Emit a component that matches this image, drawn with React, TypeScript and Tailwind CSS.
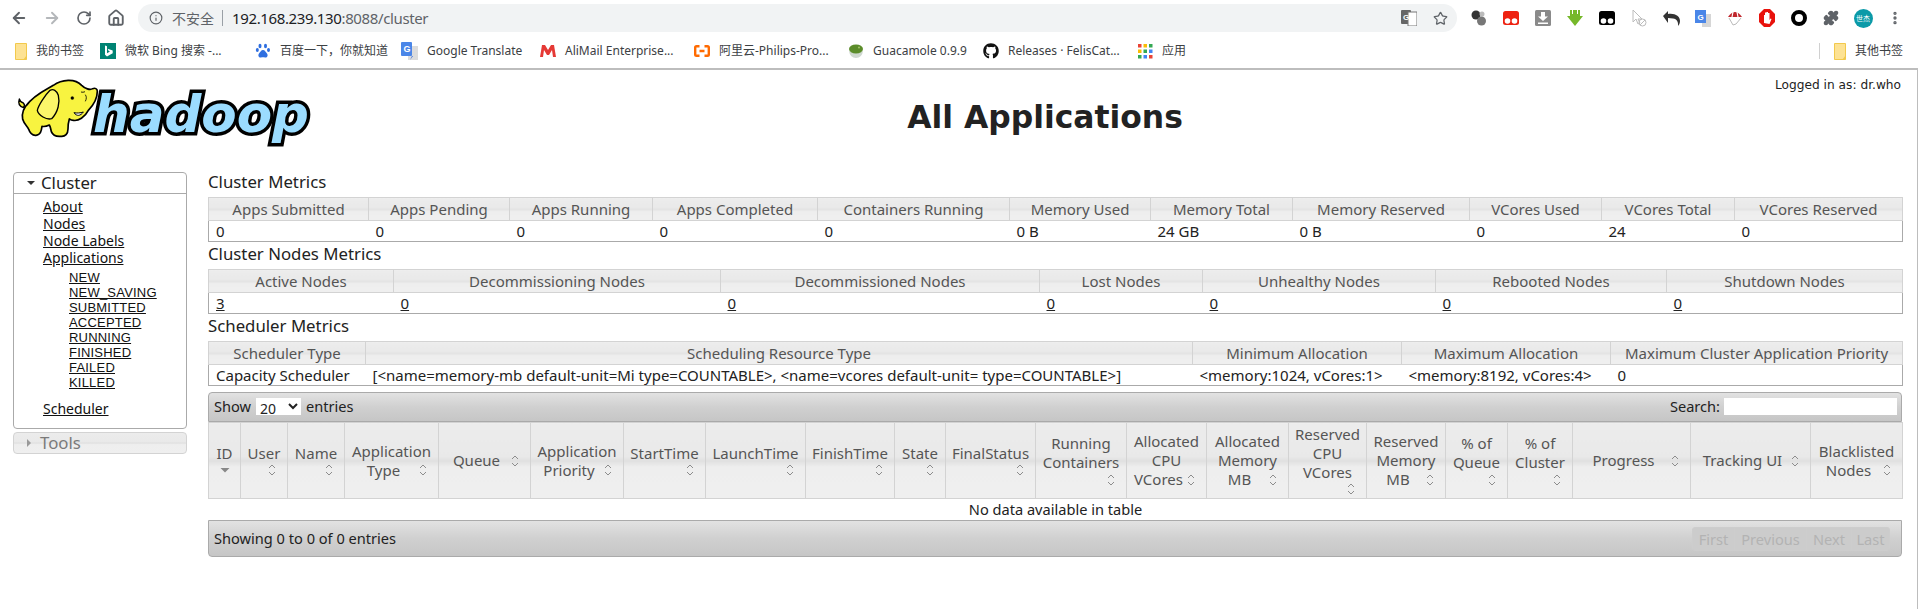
import React from 'react';
import { ArrowLeft, ArrowRight, RotateCw, Home, Info, Star, Puzzle, MoreVertical } from 'lucide-react';
import { FaGithub } from 'react-icons/fa';

const thBg = 'bg-[linear-gradient(#ececec_0%,#e9e9e9_44%,#e0e0e0_50%,#eeeeee_58%,#efefef_100%)]';
const barBg = 'bg-[linear-gradient(#e2e2e2_0%,#d0d0d0_50%,#c6c6c6_100%)]';

const Folder = () => (
  <svg width="12" height="17" viewBox="0 0 12 17" className="shrink-0">
    <path d="M.5.5h11v16H.5z" fill="#fde293" stroke="#f2c94c" />
    <path d="M11.5 12.5l-3 4h3z" fill="#f2c94c" />
  </svg>
);

const bookmarks = [
  { w: 'w-[85px]', label: '我的书签', icon: <Folder /> },
  {
    w: 'w-[155px]',
    label: '微软 Bing 搜索 -...',
    icon: (
      <svg width="16" height="16" viewBox="0 0 16 16" className="shrink-0">
        <rect width="16" height="16" fill="#008373" />
        <path d="M5 2.5l2 .8v7l3-1.7-1.5-.8-.8-2 5 1.8v2.6l-5.7 3.2L5 11.8z" fill="#fff" />
      </svg>
    ),
  },
  {
    w: 'w-[146px]',
    label: '百度一下，你就知道',
    icon: (
      <svg width="16" height="16" viewBox="0 0 16 16" className="shrink-0" fill="#2f6fe0">
        <ellipse cx="5" cy="3" rx="1.5" ry="2.2" />
        <ellipse cx="10.5" cy="3" rx="1.5" ry="2.2" />
        <ellipse cx="2.3" cy="7" rx="1.5" ry="2" />
        <ellipse cx="13.5" cy="7" rx="1.5" ry="2" />
        <path d="M8 7c-2 0-2.500 2-4 3.500-1.500 2 0 4.500 2 4 1-.3 3-.3 4 0 2 .5 3.500-2 2-4C10.500 9 10 7 8 7z" />
      </svg>
    ),
  },
  {
    w: 'w-[139px]',
    label: 'Google Translate',
    icon: (
      <svg width="17" height="18" viewBox="0 0 17 18" className="shrink-0">
        <rect x="7" y="4" width="10" height="14" fill="#dcdcdc" />
        <rect width="11" height="14" rx="1" fill="#4a86e8" />
        <path d="M11 14l-2 4 3-4z" fill="#3367d6" />
        <text x="2.500" y="10" fontSize="9" fontWeight="700" fill="#fff" fontFamily="Liberation Sans">G</text>
      </svg>
    ),
  },
  {
    w: 'w-[154px]',
    label: 'AliMail Enterprise...',
    icon: (
      <svg width="16" height="14" viewBox="0 0 16 14" className="shrink-0">
        <path d="M0 13L2 1h3l3 5 3-5h3l2 12h-3l-1-7-3 5H7L4 6l-1 7z" fill="#e53935" />
      </svg>
    ),
  },
  {
    w: 'w-[154px]',
    label: '阿里云-Philips-Pro...',
    icon: (
      <svg width="16" height="12" viewBox="0 0 16 12" className="shrink-0" fill="none" stroke="#ff6a00" strokeWidth="2.400">
        <path d="M5.500 1.200H2.500Q1.200 1.200 1.200 2.500v7q0 1.300 1.300 1.300h3M10.500 1.200h3q1.300 0 1.300 1.300v7q0 1.300-1.300 1.300h-3M5.500 6h5" />
      </svg>
    ),
  },
  {
    w: 'w-[135px]',
    label: 'Guacamole 0.9.9',
    icon: (
      <svg width="16" height="16" viewBox="0 0 16 16" className="shrink-0">
        <path d="M1 8q7 3 14 0-1 7-7 7T1 8z" fill="#cfd8d0" />
        <ellipse cx="8" cy="6" rx="7" ry="4.500" fill="#5b8c2a" />
        <circle cx="11" cy="4.500" r="1" fill="#a5c46b" />
      </svg>
    ),
  },
  { w: 'w-[155px]', label: 'Releases · FelisCat...', icon: <FaGithub className="w-[16px] h-[16px] shrink-0 text-[#111]" /> },
  {
    w: 'w-[60px]',
    label: '应用',
    icon: (
      <svg width="15" height="15" viewBox="0 0 15 15" className="shrink-0">
        {[0, 5.500, 11].map((y, i) =>
          [0, 5.500, 11].map((x, j) => (
            <rect key={`${i}-${j}`} x={x} y={y} width="3.500" height="3.500" fill={['#ea4335', '#fbbc05', '#34a853', '#4285f4'][(i + j) % 4]} />
          )),
        )}
      </svg>
    ),
  },
];

const TamperIcon = ({ color }: { color: string }) => (
  <svg width="16" height="16" viewBox="0 0 16 16">
    <rect y="1" width="16" height="14" rx="2.500" fill={color} />
    <circle cx="4.500" cy="11" r="2.800" fill="#fff" />
    <circle cx="11.500" cy="11" r="2.800" fill="#fff" />
  </svg>
);

const extensions = [
  <svg width="18" height="16" viewBox="0 0 18 16" key="balls">
    <circle cx="6" cy="5" r="4.500" fill="#333" />
    <circle cx="12" cy="4" r="2.500" fill="#bbb" />
    <circle cx="11.500" cy="11" r="4.500" fill="#777" />
  </svg>,
  <TamperIcon color="#ee2211" key="tamper-red" />,
  <svg width="16" height="16" viewBox="0 0 16 16" key="download">
    <rect width="16" height="16" rx="1.500" fill="#8a8a8a" />
    <path d="M6 2h4v4.500h3L8 11 3 6.500h3zM3 12.500h10V14H3z" fill="#fff" />
  </svg>,
  <svg width="16" height="16" viewBox="0 0 16 16" key="green">
    <path d="M3 0h2v4h1V0h4v4h1V0h2v6h3l-8 10L0 6h3z" fill="#76b82a" />
  </svg>,
  <TamperIcon color="#000" key="tamper-black" />,
  <svg width="16" height="18" viewBox="0 0 16 18" key="cursor" fill="none" stroke="#bcbcbc" strokeWidth="1">
    <path d="M2 1v12l3-3 2 5 2-1-2-4h4z" />
    <circle cx="11.500" cy="13.500" r="3.500" />
    <path d="M9 16l5-5" />
  </svg>,
  <svg width="17" height="16" viewBox="0 0 17 16" key="undo">
    <path d="M0 6l5-5v3c7-1 12 2 12 7 0 2-1 4-2 5 .5-4-1-7-5-7.500L5 8v5z" fill="#333" />
  </svg>,
  <svg width="16" height="17" viewBox="0 0 16 17" key="gtranslate">
    <rect x="7" y="4" width="9" height="13" fill="#d6d6d6" />
    <rect width="11" height="13" fill="#4a86e8" />
    <text x="2.500" y="9.500" fontSize="8" fontWeight="700" fill="#fff" fontFamily="Liberation Sans">G</text>
  </svg>,
  <svg width="16" height="16" viewBox="0 0 16 16" key="umbrella">
    <path d="M1 7Q8-3 15 7z" fill="#c0272d" />
    <path d="M6 2L5 7M10 2l1 5" stroke="#fff" strokeWidth="1.200" />
    <path d="M2 8l4 7 3-1 5-6" fill="none" stroke="#bbb" />
  </svg>,
  <svg width="16" height="18" viewBox="0 0 16 18" key="hand">
    <path d="M5 0h6l5 5v8l-5 5H5l-5-5V5z" fill="#e8120c" />
    <path d="M5 14V6h1v3V3.500h1.500V9V3h1.500v6V4h1.500v7l1-1.500 1 .5-2 5z" fill="#fff" />
  </svg>,
  <svg width="16" height="16" viewBox="0 0 16 16" key="ring">
    <circle cx="8" cy="8" r="6" fill="none" stroke="#000" strokeWidth="4" />
  </svg>,
  <Puzzle key="puzzle" className="w-[16px] h-[16px] text-[#5f6368] fill-[#5f6368]" />,
  <div key="avatar" className="w-[19px] h-[19px] rounded-full bg-[#0b9aa8] text-white text-[7px] leading-[19px] text-center">
    世杰
  </div>,
  <MoreVertical key="more" className="w-[16px] h-[16px] text-[#5f6368]" strokeWidth={3} />,
];

const Toolbar = () => (
  <div className="h-[36px] flex items-center text-[#5f6368]">
    <div className="w-[38px] flex justify-center">
      <ArrowLeft className="w-[18px] h-[18px]" strokeWidth={2.5} />
    </div>
    <div className="w-[28px] flex justify-center text-[#b4b7ba]">
      <ArrowRight className="w-[18px] h-[18px]" strokeWidth={2.5} />
    </div>
    <div className="w-[36px] flex justify-center">
      <RotateCw className="w-[16px] h-[16px]" strokeWidth={2.5} />
    </div>
    <div className="w-[28px] flex justify-center">
      <Home className="w-[18px] h-[18px]" strokeWidth={2.5} />
    </div>
    <div className="ml-[8px] w-[1319px] h-[28px] rounded-full bg-[#f1f3f4] flex items-center">
      <Info className="ml-[11px] w-[14px] h-[14px]" />
      <span className="ml-[9px] text-[14px] text-[#5f6368]">不安全</span>
      <span className="ml-[8px] w-px h-[16px] bg-[#9aa0a6]" />
      <span className="ml-[9px] text-[15px] tracking-[-0.37px] text-[#202124]">
        192.168.239.130<span className="text-[#5f6368]">:8088/cluster</span>
      </span>
      <div className="flex-1" />
      <svg width="16" height="16" viewBox="0 0 16 16" className="mr-[16px]">
        <rect width="10" height="14" rx="1" fill="#666" />
        <rect x="7" y="2" width="9" height="14" fill="#fff" stroke="#777" />
        <text x="2" y="10" fontSize="8" fontWeight="700" fill="#fff" fontFamily="Liberation Sans">G</text>
      </svg>
      <Star className="mr-[9px] w-[15px] h-[15px]" strokeWidth={2} />
    </div>
    <div className="ml-[6px] flex items-center">
      {extensions.map((icon, i) => (
        <div key={i} className="w-[32px] flex justify-center items-center">
          {icon}
        </div>
      ))}
    </div>
  </div>
);

const Bookmarks = () => (
  <div className="h-[34px] flex items-center border-b-2 border-[#bdbdbd] pl-[15px] pb-[2px] text-[12px] text-[#3c4043]">
    {bookmarks.map((b) => (
      <div key={b.label} className={`${b.w} flex items-center gap-[9px] whitespace-nowrap`}>
        {b.icon}
        <span>{b.label}</span>
      </div>
    ))}
    <div className="flex-1" />
    <span className="w-px h-[16px] bg-[#d0d0d0]" />
    <div className="ml-[14px] w-[84px] flex items-center gap-[9px] whitespace-nowrap">
      <Folder />
      <span>其他书签</span>
    </div>
  </div>
);

const Logo = () => (
  <svg width="300" height="76" viewBox="0 0 300 76" className="shrink-0">
    <text
      x="78"
      y="56"
      fontFamily="DejaVu Sans"
      fontWeight="700"
      fontStyle="italic"
      fontSize="52"
      textLength="216"
      lengthAdjust="spacingAndGlyphs"
      fill="#9bdcff"
      stroke="#000"
      strokeWidth="7"
      paintOrder="stroke"
    >
      hadoop
    </text>
    <g transform="translate(-5,-4) scale(0.3333)" stroke="#000" strokeWidth="5" strokeLinejoin="round">
      <path d="M40 107c-12-4-16-14-12-26 3 9 8 11 12 12 4 4 4 10 0 14z" fill="#f6f03a" strokeWidth="4" />
      <path
        d="M50 100C70 70 105 55 130 40 155 22 195 18 215 40c10 10 25 15 33 10 7-3 14 0 14 8 0 22-12 42-27 57-10 20-30 33-45 30-4 0-9-2-12-4-3 10-4 20-4 30 0 14-8 24-22 22-14 1-24-4-28-14-2-8-2-14-6-20-8 4-14 6-22 4-2 14-4 26-18 27-10 1-18-6-22-18-2-8-14-16-18-30-4-20 3-35 18-50z"
        fill="#f8f340"
      />
      <path d="M120 55c-15 15-35 45-38 60 3 15 28 30 43 25 20-20 25-50 20-70-5-15-15-20-25-15z" fill="#fbf66a" strokeWidth="4" />
      <circle cx="187" cy="78" r="4.500" fill="#000" strokeWidth="1" />
      <path d="M192 122c8 12 20 10 28-2-8 3-20 4-28 2z" fill="#fff" strokeWidth="3" />
      <path d="M226 68c4 6 4 12 0 20M213 60c4 1 8 1 12-1" fill="none" strokeWidth="2.500" />
    </g>
  </svg>
);

const SideLink = ({ children }: { children: React.ReactNode }) => (
  <li>
    <a href="#" className="underline text-[#111]">
      {children}
    </a>
  </li>
);

const Sidebar = () => (
  <aside className="w-[174px] shrink-0 ml-[13px] mt-[2px]">
    <div className="h-[257px] border border-[#aaaaaa] rounded-[4px] bg-white">
      <div className="h-[21px] border-b border-[#aaaaaa] flex items-center pl-[13px] text-[16.800px] text-[#222]">
        <span className="w-0 h-0 border-x-[4px] border-x-transparent border-t-[4px] border-t-[#333] mr-[6px]" />
        Cluster
      </div>
      <ul className="pl-[29px] pt-[4px] text-[14px] leading-[17px]">
        <SideLink>About</SideLink>
        <SideLink>Nodes</SideLink>
        <SideLink>Node Labels</SideLink>
        <SideLink>Applications</SideLink>
        <ul className="pl-[26px] pt-[4px] pb-[10px] text-[13px] tracking-[0.2px] leading-[15px] font-['Liberation_Sans',sans-serif]">
          {['NEW', 'NEW_SAVING', 'SUBMITTED', 'ACCEPTED', 'RUNNING', 'FINISHED', 'FAILED', 'KILLED'].map((s) => (
            <SideLink key={s}>{s}</SideLink>
          ))}
        </ul>
        <SideLink>Scheduler</SideLink>
      </ul>
    </div>
    <div className={`mt-[3px] h-[22px] border border-[#d3d3d3] rounded-[4px] ${thBg} flex items-center pl-[13px] text-[16.800px] text-[#7a7a7a]`}>
      <span className="w-0 h-0 border-y-[4px] border-y-transparent border-l-[4px] border-l-[#999] mr-[9px]" />
      Tools
    </div>
  </aside>
);

type MetricCol = { title: string; value: string; w: string };

const MetricTable = ({ cols, link }: { cols: MetricCol[]; link?: boolean }) => (
  <table className="w-[1694px] table-fixed border-collapse text-[15px]">
    <colgroup>
      {cols.map((c) => (
        <col key={c.title} className={c.w} />
      ))}
    </colgroup>
    <thead>
      <tr>
        {cols.map((c) => (
          <th key={c.title} className={`h-[23px] p-0 font-normal leading-[20px] text-[#555] border border-[#d3d3d3] ${thBg}`}>
            {c.title}
          </th>
        ))}
      </tr>
    </thead>
    <tbody>
      <tr className="border-x border-b border-[#aaaaaa]">
        {cols.map((c) => (
          <td key={c.title} className="h-[21px] py-0 pl-[7px] pr-0 text-[#222] whitespace-nowrap leading-[20px]">
            {link ? (
              <a href="#" className="underline">
                {c.value}
              </a>
            ) : (
              c.value
            )}
          </td>
        ))}
      </tr>
    </tbody>
  </table>
);

const clusterCols: MetricCol[] = [
  { title: 'Apps Submitted', value: '0', w: 'w-[160px]' },
  { title: 'Apps Pending', value: '0', w: 'w-[141px]' },
  { title: 'Apps Running', value: '0', w: 'w-[143px]' },
  { title: 'Apps Completed', value: '0', w: 'w-[165px]' },
  { title: 'Containers Running', value: '0', w: 'w-[192px]' },
  { title: 'Memory Used', value: '0 B', w: 'w-[141px]' },
  { title: 'Memory Total', value: '24 GB', w: 'w-[142px]' },
  { title: 'Memory Reserved', value: '0 B', w: 'w-[177px]' },
  { title: 'VCores Used', value: '0', w: 'w-[132px]' },
  { title: 'VCores Total', value: '24', w: 'w-[133px]' },
  { title: 'VCores Reserved', value: '0', w: 'w-[168px]' },
];

const nodeCols: MetricCol[] = [
  { title: 'Active Nodes', value: '3', w: 'w-[185px]' },
  { title: 'Decommissioning Nodes', value: '0', w: 'w-[327px]' },
  { title: 'Decommissioned Nodes', value: '0', w: 'w-[319px]' },
  { title: 'Lost Nodes', value: '0', w: 'w-[163px]' },
  { title: 'Unhealthy Nodes', value: '0', w: 'w-[233px]' },
  { title: 'Rebooted Nodes', value: '0', w: 'w-[231px]' },
  { title: 'Shutdown Nodes', value: '0', w: 'w-[236px]' },
];

const schedulerCols: MetricCol[] = [
  { title: 'Scheduler Type', value: 'Capacity Scheduler', w: 'w-[157px]' },
  {
    title: 'Scheduling Resource Type',
    value: '[<name=memory-mb default-unit=Mi type=COUNTABLE>, <name=vcores default-unit= type=COUNTABLE>]',
    w: 'w-[827px]',
  },
  { title: 'Minimum Allocation', value: '<memory:1024, vCores:1>', w: 'w-[209px]' },
  { title: 'Maximum Allocation', value: '<memory:8192, vCores:4>', w: 'w-[209px]' },
  { title: 'Maximum Cluster Application Priority', value: '0', w: 'w-[292px]' },
];

const SortIcon = ({ active }: { active?: boolean }) =>
  active ? (
    <svg width="16" height="10" viewBox="0 0 16 10" className="shrink-0">
      <path d="M3.500 3h9L8 7.500z" fill="#888" />
    </svg>
  ) : (
    <svg width="16" height="14" viewBox="0 0 16 14" className="shrink-0" fill="none" stroke="#8c8c8c" strokeWidth="1">
      <path d="M5 5l3-3 3 3M5 9l3 3 3-3" />
    </svg>
  );

type AppCol = { lines: string[]; w: string; below?: boolean; active?: boolean };

const appCols: AppCol[] = [
  { lines: ['ID'], w: 'w-[32px]', below: true, active: true },
  { lines: ['User'], w: 'w-[47px]', below: true },
  { lines: ['Name'], w: 'w-[57px]', below: true },
  { lines: ['Application', 'Type'], w: 'w-[94px]' },
  { lines: ['Queue'], w: 'w-[92px]' },
  { lines: ['Application', 'Priority'], w: 'w-[93px]' },
  { lines: ['StartTime'], w: 'w-[82px]', below: true },
  { lines: ['LaunchTime'], w: 'w-[100px]', below: true },
  { lines: ['FinishTime'], w: 'w-[89px]', below: true },
  { lines: ['State'], w: 'w-[51px]', below: true },
  { lines: ['FinalStatus'], w: 'w-[90px]', below: true },
  { lines: ['Running', 'Containers'], w: 'w-[91px]', below: true },
  { lines: ['Allocated', 'CPU', 'VCores'], w: 'w-[80px]' },
  { lines: ['Allocated', 'Memory', 'MB'], w: 'w-[82px]' },
  { lines: ['Reserved', 'CPU', 'VCores'], w: 'w-[78px]', below: true },
  { lines: ['Reserved', 'Memory', 'MB'], w: 'w-[79px]' },
  { lines: ['% of', 'Queue'], w: 'w-[62px]', below: true },
  { lines: ['% of', 'Cluster'], w: 'w-[65px]', below: true },
  { lines: ['Progress'], w: 'w-[118px]' },
  { lines: ['Tracking UI'], w: 'w-[120px]' },
  { lines: ['Blacklisted', 'Nodes'], w: 'w-[92px]' },
];

const AppHeader = ({ col }: { col: AppCol }) => {
  const head = col.below ? col.lines : col.lines.slice(0, -1);
  const last = col.lines[col.lines.length - 1];
  return (
    <th className={`h-[76px] px-[7px] py-0 font-normal text-[15px] text-[#555] leading-[19px] border border-[#d3d3d3] whitespace-nowrap ${thBg}`}>
      <div className="-mx-[6px]">
        {head.map((l) => (
          <div key={l}>{l}</div>
        ))}
      </div>
      {col.below ? (
        <div className="flex justify-end h-[15px] items-center">
          <SortIcon active={col.active} />
        </div>
      ) : (
        <div className="flex items-center">
          <span className="flex-1 text-center">{last}</span>
          <SortIcon />
        </div>
      )}
    </th>
  );
};

const AppsTable = () => (
  <div className="mt-[6px] w-[1694px] text-[14.600px]">
    <div className={`h-[30px] border border-[#aaaaaa] rounded-t-[4px] ${barBg} flex items-center justify-between pl-[5px] pr-[4px] text-[#222]`}>
      <div className="flex items-center">
        Show
        <select defaultValue="20" className="mx-[5px] w-[45px] h-[17px] bg-white text-[14px] outline-none">
          <option>20</option>
        </select>
        entries
      </div>
      <div className="flex items-center">
        Search:
        <input className="ml-[4px] w-[173px] h-[17px] bg-white outline-none" />
      </div>
    </div>
    <table className="w-[1694px] table-fixed border-collapse">
      <colgroup>
        {appCols.map((c) => (
          <col key={c.lines.join()} className={c.w} />
        ))}
      </colgroup>
      <thead>
        <tr>
          {appCols.map((c) => (
            <AppHeader key={c.lines.join()} col={c} />
          ))}
        </tr>
      </thead>
      <tbody>
        <tr>
          <td colSpan={21} className="h-[21px] p-0 text-center text-[#222] leading-[21px]">
            No data available in table
          </td>
        </tr>
      </tbody>
    </table>
    <div className={`h-[37px] border border-[#aaaaaa] rounded-b-[4px] ${barBg} flex items-center justify-between pl-[5px] pr-[11px] text-[#222]`}>
      <span>Showing 0 to 0 of 0 entries</span>
      <div className="flex h-[24px] text-[#b3b3b3] border border-[#cdcdcd] rounded-[3px] bg-[#cccccc]">
        <span className="w-[41px] text-center leading-[22px]">First</span>
        <span className="w-[72px] text-center leading-[22px] border-l border-[#cdcdcd]">Previous</span>
        <span className="w-[45px] text-center leading-[22px] border-l border-[#cdcdcd]">Next</span>
        <span className="w-[38px] text-center leading-[22px] border-l border-[#cdcdcd]">Last</span>
      </div>
    </div>
  </div>
);

const SectionTitle = ({ children }: { children: React.ReactNode }) => (
  <h3 className="h-[27px] pb-[3px] flex items-center text-[16.800px] text-[#222] font-normal">{children}</h3>
);

export default function App() {
  return (
    <div className="w-[1918px] h-[609px] overflow-hidden bg-white font-['Noto_Sans','Noto_Sans_CJK_SC',sans-serif]">
      <Toolbar />
      <Bookmarks />
      <div className="border-r border-[#bdbdbd] h-[539px]">
        <header className="h-[100px] flex pl-[15px] pt-[6px]">
          <Logo />
          <h1 className="flex-1 text-center text-[31.400px] font-bold text-[#222] leading-[40px] mt-[21px] font-['DejaVu_Sans',sans-serif]">
            All Applications
          </h1>
          <div className="w-[142px] text-[12.200px] text-[#222] font-['DejaVu_Sans',sans-serif]">Logged in as: dr.who</div>
        </header>
        <div className="flex">
          <Sidebar />
          <main className="ml-[21px] w-[1694px]">
            <SectionTitle>Cluster Metrics</SectionTitle>
            <MetricTable cols={clusterCols} />
            <SectionTitle>Cluster Nodes Metrics</SectionTitle>
            <MetricTable cols={nodeCols} link />
            <SectionTitle>Scheduler Metrics</SectionTitle>
            <MetricTable cols={schedulerCols} />
            <AppsTable />
          </main>
        </div>
      </div>
    </div>
  );
}
